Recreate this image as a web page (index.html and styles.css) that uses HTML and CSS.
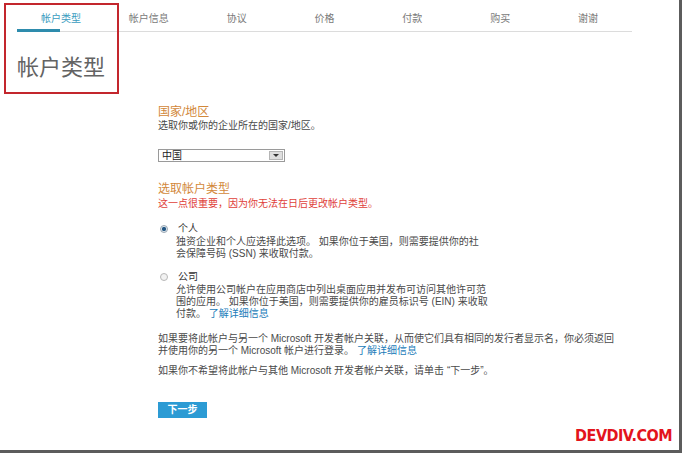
FILE: index.html
```html
<!DOCTYPE html>
<html lang="zh-CN">
<head>
    <meta charset="UTF-8">
    <meta name="viewport" content="width=device-width, initial-scale=1.0">
    <link rel="stylesheet" href="styles.css">
    <title>帐户类型</title>
</head>
<body>
    <div class="frame">
        <ul class="steps">
            <li class="step active">帐户类型</li>
            <li class="step">帐户信息</li>
            <li class="step">协议</li>
            <li class="step">价格</li>
            <li class="step">付款</li>
            <li class="step">购买</li>
            <li class="step">谢谢</li>
        </ul>

        <h1 class="page-title">帐户类型</h1>
        <div class="highlight"></div>

        <div class="content">
            <h2 class="section-title">国家/地区</h2>
            <p class="text">选取你或你的企业所在的国家/地区。</p>
            <div class="select">
                <span class="select-value">中国</span>
                <span class="select-arrow"><span class="caret"></span></span>
            </div>

            <h2 class="section-title type-title">选取帐户类型</h2>
            <p class="text warning">这一点很重要，因为你无法在日后更改帐户类型。</p>

            <div class="option first">
                <div class="option-label"><span class="radio checked"></span>个人</div>
                <p class="text option-desc">独资企业和个人应选择此选项。 如果你位于美国，则需要提供你的社会保障号码 (SSN) 来收取付款。</p>
            </div>

            <div class="option">
                <div class="option-label"><span class="radio"></span>公司</div>
                <p class="text option-desc">允许使用公司帐户在应用商店中列出桌面应用并发布可访问其他许可范围的应用。 如果你位于美国，则需要提供你的雇员标识号 (EIN) 来收取付款。 <a href="#" class="link">了解详细信息</a></p>
            </div>

            <p class="text note">如果要将此帐户与另一个 Microsoft 开发者帐户关联，从而使它们具有相同的发行者显示名，你必须返回并使用你的另一个 Microsoft 帐户进行登录。 <a href="#" class="link">了解详细信息</a></p>
            <p class="text note-2">如果你不希望将此帐户与其他 Microsoft 开发者帐户关联，请单击 “下一步”。</p>

            <button class="next">下一步</button>
        </div>

        <div class="watermark">DEVDIV.COM</div>
    </div>
</body>
</html>
```

FILE: styles.css
```css
body {
    margin: 0;
    background: #fff;
    font-family: 'Liberation Sans', 'Noto Sans CJK SC', sans-serif;
    color: #4a4a4a;
}

.frame {
    position: relative;
    height: 453px;
    box-sizing: border-box;
    padding-left: 17px;
    border-right: 3px solid #5c5c5c;
    border-bottom: 3px solid #5c5c5c;
    overflow: hidden;
}

.steps {
    display: flex;
    width: 615px;
    margin: 0;
    padding: 0;
    list-style: none;
    border-bottom: 1px solid #dcdcdc;
}

.step {
    position: relative;
    flex: 1;
    padding: 12px 0 6px;
    font-size: 10px;
    line-height: 13px;
    text-align: center;
    color: #7a7a7a;
}

.step.active {
    color: #3a9cc0;
}

.step.active::after {
    content: "";
    position: absolute;
    left: 0;
    bottom: -1px;
    width: 43px;
    height: 3px;
    background: #2e8cad;
}

.page-title {
    margin: 23px 0 0;
    font-size: 22px;
    line-height: 26px;
    font-weight: normal;
    color: #636363;
}

.highlight {
    position: absolute;
    left: 4px;
    top: 3px;
    width: 111px;
    height: 87px;
    border: 2px solid #c3262d;
}

.content {
    width: 465px;
    margin-left: 141px;
}

.section-title {
    margin: 24px 0 0;
    font-size: 12px;
    line-height: 15px;
    font-weight: normal;
    color: #d2883a;
}

.type-title {
    margin-top: 20px;
}

.text {
    margin: 0;
    font-size: 10px;
    line-height: 12px;
    color: #4a4a4a;
}

.warning {
    margin-top: 1px;
    color: #e0413a;
}

.select {
    display: flex;
    width: 127px;
    height: 13px;
    margin-top: 17px;
    box-sizing: border-box;
    border: 1px solid #9a9a9a;
    background: #fff;
}

.select-value {
    flex: 1;
    padding-left: 3px;
    font-size: 10px;
    line-height: 11px;
    color: #222;
}

.select-arrow {
    display: flex;
    align-items: center;
    justify-content: center;
    width: 14px;
    margin: 1px;
    background: #dedede;
    border: 1px solid #b5b5b5;
    box-sizing: border-box;
}

.caret {
    width: 0;
    height: 0;
    border-left: 3px solid transparent;
    border-right: 3px solid transparent;
    border-top: 3px solid #333;
}

.option {
    margin-top: 10px;
}

.option.first {
    margin-top: 12px;
}

.option-label {
    display: flex;
    align-items: center;
    font-size: 10px;
    line-height: 13px;
    color: #333;
}

.radio {
    width: 8px;
    height: 8px;
    margin: 0 10px 0 2px;
    box-sizing: border-box;
    border-radius: 50%;
    border: 1px solid #b8b8b8;
    background: #f2f2f2;
}

.radio.checked {
    border-color: #9aa7b3;
    background: radial-gradient(circle, #1f4f7a 0, #2b5f8c 45%, #dfe6ec 55%);
}

.option-desc {
    width: 312px;
    margin: 1px 0 0 18px;
}

.link {
    display: inline-block;
    line-height: 12px;
    color: #1b7cb9;
    text-decoration: none;
}

.note {
    margin-top: 13px;
}

.note-2 {
    margin-top: 8px;
}

.next {
    display: block;
    width: 49px;
    height: 16px;
    margin-top: 25px;
    padding: 0;
    border: none;
    background: #2c9bd4;
    color: #fff;
    font-family: 'Liberation Sans', 'Noto Sans CJK SC', sans-serif;
    font-size: 10px;
    font-weight: bold;
    line-height: 16px;
    cursor: pointer;
}

.watermark {
    position: absolute;
    right: 7px;
    bottom: 6px;
    font-family: 'DejaVu Sans Condensed', 'DejaVu Sans', sans-serif;
    font-size: 16px;
    font-weight: bold;
    line-height: 16px;
    letter-spacing: -0.5px;
    color: #e3141c;
}
```
